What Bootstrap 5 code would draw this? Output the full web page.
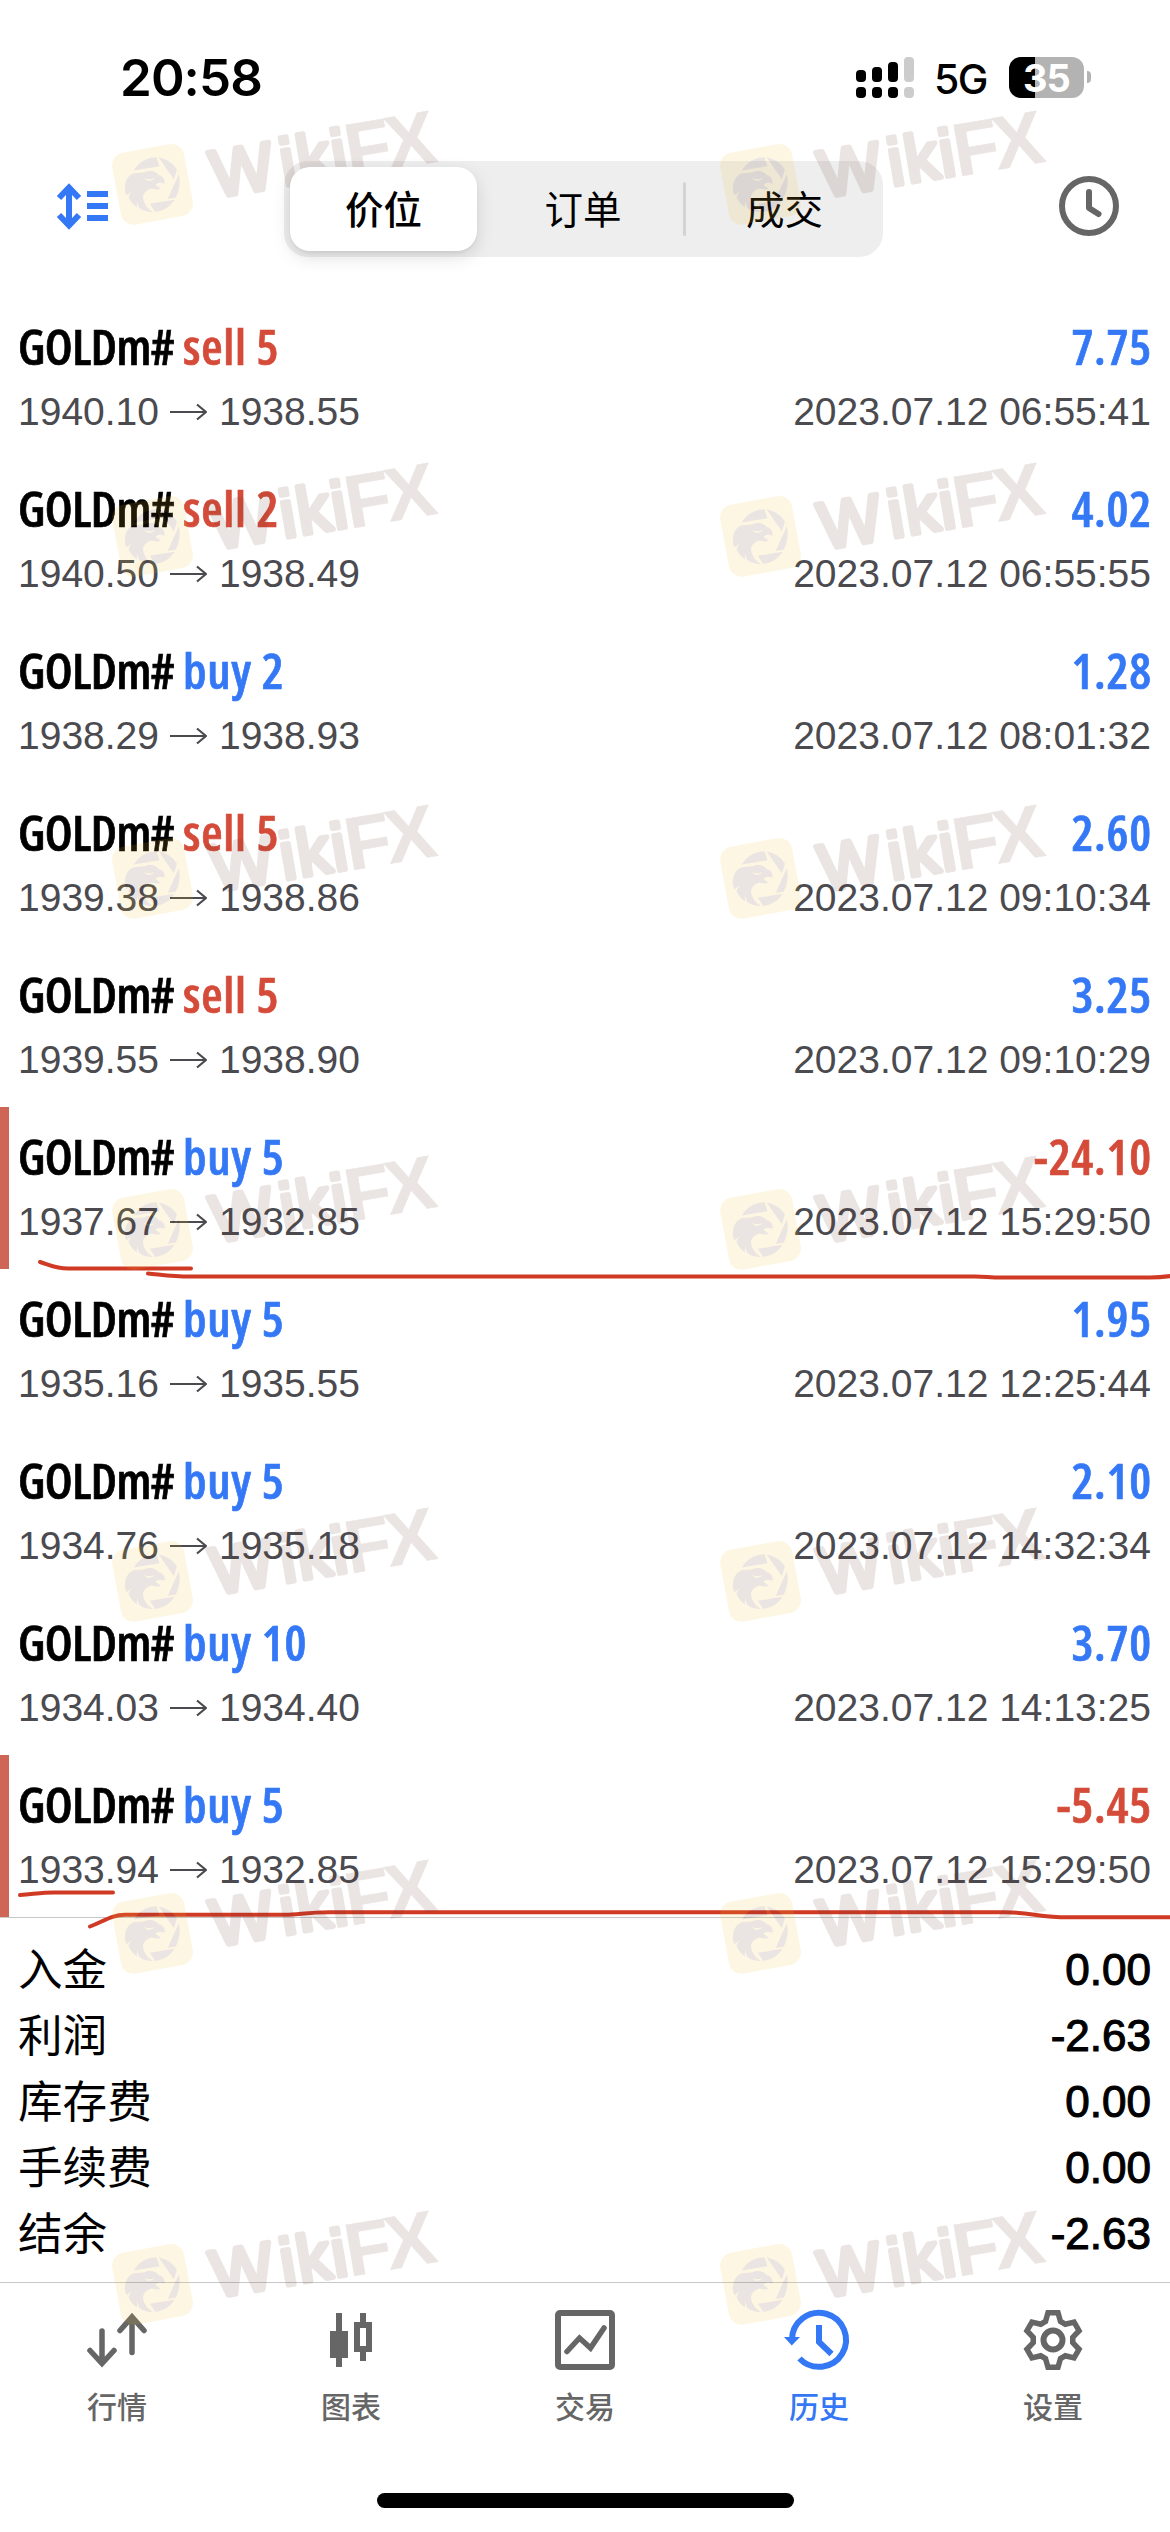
<!DOCTYPE html>
<html lang="zh-CN">
<head>
<meta charset="utf-8">
<meta name="viewport" content="width=device-width, initial-scale=1">
<title>历史</title>
<link href="https://cdn.jsdelivr.net/npm/bootstrap@5.3.0/dist/css/bootstrap.min.css" rel="stylesheet">
<style>
  :root { --ios-blue: #3478f6; --ios-red: #d54b39; --ink: #4a4a4f; --tab: #666; --hair: #c8c8ca; }
  body { background: #fff; color: #000; font-family: "Liberation Sans", "Noto Sans CJK SC", sans-serif; }
  .screen { width: 1170px; height: 2532px; }
  svg { display: block; overflow: visible; }

  .statusbar { height: 161px; padding: 52px 79px 0 120px; }
  .clock-text { font: 600 51px/51px Inter, sans-serif; letter-spacing: -.9px; }
  .net-text { font: 500 41px/50px Inter, sans-serif; letter-spacing: -1.5px; margin: 2px 0 0 20px; }
  .battery { width: 75px; height: 41px; border-radius: 12px; margin: 5px 0 0 22px;
    background: linear-gradient(to right, #000 26px, #b3b3b3 26px);
    font: 700 38px/42px Inter, sans-serif; letter-spacing: -1px; }
  .battery-tip { width: 4px; height: 12px; border-radius: 0 6px 6px 0; background: #b3b3b3; margin: 19px 0 0 3px; }
  .signal { margin-top: 5px; }

  .toolbar { height: 136px; padding: 0 51px 0 57px; }
  .tool-left { margin-top: 22px; }
  .tool-right { margin-top: 15px; }
  .segments { width: 599px; height: 96px; border-radius: 24px; background: #eee; padding: 6px; }
  .segments .nav-link { flex: none; width: 200px; height: 84px; line-height: 81px; padding: 0; text-align: center; color: #000;
    font-size: 38.5px; font-weight: 500; font-family: "Noto Sans CJK SC", sans-serif; border-radius: 20px; }
  .segments .nav-link.active { width: 187px; margin-right: 6px; background: #fff; color: #000; z-index: 3; font-weight: 500;
    box-shadow: 0 6px 18px rgba(0,0,0,.13), 0 2px 3px rgba(0,0,0,.05); }
  .segments .nav-link:not(.active) { font-weight: 400; }
  .segments .nav-link:last-child { width: 191px; padding-left: 6px; }
  .segments .split { flex: none; width: 3px; height: 54px; background: #d3d3d5; border-radius: 2px; }

  .deal { height: 162px; padding: 16px 19px 0 18px; }
  .deal.loss { box-shadow: inset 9px 0 0 #cf6557; }
  .deal-name, .deal-sum { font: 600 49px/66px "Open Sans", sans-serif; font-stretch: 75%; letter-spacing: .8px; -webkit-text-stroke: .7px currentColor; }
  .deal-sum { margin-right: -1px; }
  .deal-sym { letter-spacing: -.5px; margin-right: 9px; }
  .deal-info { font-size: 39px; line-height: 66px; color: var(--ink); }
  .deal-info svg { margin: 0 12px 1px 11px; }
  .tone-up { color: var(--ios-blue); }
  .tone-down { color: var(--ios-red); }

  .totals { height: 365px; padding: 18px 19px 0 18px; border-top: 1px solid var(--hair); }
  .totals li { height: 66px; line-height: 67px; }
  .totals .key { font: 400 44.6px/62px "Noto Sans CJK SC", sans-serif; }
  .totals .sum { font-size: 44px; -webkit-text-stroke: 1.1px #000; }

  .tabbar { height: 250px; border-top: 1px solid var(--hair); padding-top: 27px; }
  .tabbar .nav-link { padding: 0; color: var(--tab); font: 500 30px/44px "Noto Sans CJK SC", sans-serif; }
  .tabbar .nav-link.active { color: var(--ios-blue); }
  .tabbar svg { margin: 0 auto 13px; }
  .home-bar { width: 417px; height: 15px; border-radius: 8px; background: #000; bottom: 24px; left: 377px; }
  .overlay { z-index: 2; pointer-events: none; }
</style>
<script src="https://cdn.jsdelivr.net/npm/bootstrap@5.3.0/dist/js/bootstrap.bundle.min.js"></script>
</head>
<body>
<svg width="0" height="0" class="position-absolute">
  <symbol id="arrow" viewBox="0 0 37 18"><path d="M0 9H36M27 1.5L36 9L27 16.500" fill="none" stroke="#4a4a4f" stroke-width="2.2"/></symbol>
  <g id="wm">
    <g opacity=".13">
      <rect x="-36.500" y="-36.500" width="73" height="73" rx="13" transform="translate(152.500 184.300) rotate(-10.500)" fill="#f0be28"/>
      <g transform="translate(106.500 138.500) scale(.3333)" fill="#65372f">
        <path d="M82 96C97 70 124 55 150 57L159 83Z"/>
        <path d="M157 57C181 61 202 76 211 94L202 122Z"/>
        <path d="M217 107C223 132 217 160 207 178L184 181Z"/>
        <path d="M204 184C190 207 167 219 146 220L130 196Z"/>
        <path d="M57 134C62 114 74 107 82 104C96 102 108 103 114 101C132 92 152 101 157 110C170 112 176 124 174 136C162 130 152 134 147 139C152 145 158 147 162 151C150 155 142 151 134 150C118 156 108 166 110 181C114 202 128 215 140 220C122 222 106 215 98 208L92 190L91 206C78 198 70 186 66 174L76 158L60 170C54 158 54 146 57 134Z"/>
        <path d="M112 118Q124 126 144 119Q132 133 118 124Z" fill="#f0be28"/>
      </g>
    </g>
    <g opacity=".13" transform="translate(214.500 200.500) rotate(-9.600)" fill="#65372f" stroke="#65372f" font-family="Liberation Sans, sans-serif">
      <g font-size="66" stroke-width="5.200" stroke-linejoin="round"><text y="-3" x="1 71 88 123">Wiki</text></g>
      <g font-size="75" font-weight="700" stroke-width=".5"><text y="-1" x="137 178">FX</text></g>
    </g>
  </g>
</svg>

<main class="screen position-relative overflow-hidden mx-auto d-flex flex-column">
  <header>
    <div class="statusbar d-flex align-items-start">
      <div class="clock-text me-auto">20:58</div>
      <svg class="signal" width="58" height="41" viewBox="0 0 58 41">
        <rect y="13" width="10" height="12" rx="4"/><rect y="30" width="10" height="11" rx="4"/>
        <rect x="16" y="10" width="10" height="15" rx="4"/><rect x="16" y="30" width="10" height="11" rx="4"/>
        <rect x="32" y="5" width="10" height="20" rx="4"/><rect x="32" y="30" width="10" height="11" rx="4"/>
        <g fill="#ccc"><rect x="48" width="10" height="25" rx="4"/><rect x="48" y="30" width="10" height="11" rx="4"/></g>
      </svg>
      <div class="net-text">5G</div>
      <div class="battery text-white text-center">35</div>
      <div class="battery-tip"></div>
    </div>
    <div class="toolbar d-flex align-items-start justify-content-between">
      <svg class="tool-left" width="51" height="48" viewBox="0 0 51 48">
        <g fill="none" stroke="#3478f6" stroke-width="6"><path d="M12 5V42M2 15L12 4.500L22 15M2 32L12 42.500L22 32"/><path d="M30 11H51M30 23H51M30 35H51"/></g>
      </svg>
      <nav class="segments nav nav-pills flex-nowrap align-items-center">
        <a class="nav-link active position-relative">价位</a>
        <a class="nav-link">订单</a>
        <span class="split"></span>
        <a class="nav-link">成交</a>
      </nav>
      <svg class="tool-right" width="60" height="60" viewBox="0 0 60 60" fill="none" stroke="#666" stroke-width="6" stroke-linecap="round" stroke-linejoin="round"><circle cx="30" cy="30" r="27"/><path d="M30 16V32L39.500 38"/></svg>
    </div>
  </header>

  <section>
    <div class="deal">
      <div class="d-flex justify-content-between"><div class="deal-name d-flex"><span class="deal-sym">GOLDm#</span><span class="tone-down">sell 5</span></div><div class="deal-sum tone-up">7.75</div></div>
      <div class="deal-info d-flex justify-content-between"><div class="d-flex align-items-center">1940.10<svg width="37" height="18"><use href="#arrow"/></svg>1938.55</div><div>2023.07.12 06:55:41</div></div>
    </div>
    <div class="deal">
      <div class="d-flex justify-content-between"><div class="deal-name d-flex"><span class="deal-sym">GOLDm#</span><span class="tone-down">sell 2</span></div><div class="deal-sum tone-up">4.02</div></div>
      <div class="deal-info d-flex justify-content-between"><div class="d-flex align-items-center">1940.50<svg width="37" height="18"><use href="#arrow"/></svg>1938.49</div><div>2023.07.12 06:55:55</div></div>
    </div>
    <div class="deal">
      <div class="d-flex justify-content-between"><div class="deal-name d-flex"><span class="deal-sym">GOLDm#</span><span class="tone-up">buy 2</span></div><div class="deal-sum tone-up">1.28</div></div>
      <div class="deal-info d-flex justify-content-between"><div class="d-flex align-items-center">1938.29<svg width="37" height="18"><use href="#arrow"/></svg>1938.93</div><div>2023.07.12 08:01:32</div></div>
    </div>
    <div class="deal">
      <div class="d-flex justify-content-between"><div class="deal-name d-flex"><span class="deal-sym">GOLDm#</span><span class="tone-down">sell 5</span></div><div class="deal-sum tone-up">2.60</div></div>
      <div class="deal-info d-flex justify-content-between"><div class="d-flex align-items-center">1939.38<svg width="37" height="18"><use href="#arrow"/></svg>1938.86</div><div>2023.07.12 09:10:34</div></div>
    </div>
    <div class="deal">
      <div class="d-flex justify-content-between"><div class="deal-name d-flex"><span class="deal-sym">GOLDm#</span><span class="tone-down">sell 5</span></div><div class="deal-sum tone-up">3.25</div></div>
      <div class="deal-info d-flex justify-content-between"><div class="d-flex align-items-center">1939.55<svg width="37" height="18"><use href="#arrow"/></svg>1938.90</div><div>2023.07.12 09:10:29</div></div>
    </div>
    <div class="deal loss">
      <div class="d-flex justify-content-between"><div class="deal-name d-flex"><span class="deal-sym">GOLDm#</span><span class="tone-up">buy 5</span></div><div class="deal-sum tone-down">-24.10</div></div>
      <div class="deal-info d-flex justify-content-between"><div class="d-flex align-items-center">1937.67<svg width="37" height="18"><use href="#arrow"/></svg>1932.85</div><div>2023.07.12 15:29:50</div></div>
    </div>
    <div class="deal">
      <div class="d-flex justify-content-between"><div class="deal-name d-flex"><span class="deal-sym">GOLDm#</span><span class="tone-up">buy 5</span></div><div class="deal-sum tone-up">1.95</div></div>
      <div class="deal-info d-flex justify-content-between"><div class="d-flex align-items-center">1935.16<svg width="37" height="18"><use href="#arrow"/></svg>1935.55</div><div>2023.07.12 12:25:44</div></div>
    </div>
    <div class="deal">
      <div class="d-flex justify-content-between"><div class="deal-name d-flex"><span class="deal-sym">GOLDm#</span><span class="tone-up">buy 5</span></div><div class="deal-sum tone-up">2.10</div></div>
      <div class="deal-info d-flex justify-content-between"><div class="d-flex align-items-center">1934.76<svg width="37" height="18"><use href="#arrow"/></svg>1935.18</div><div>2023.07.12 14:32:34</div></div>
    </div>
    <div class="deal">
      <div class="d-flex justify-content-between"><div class="deal-name d-flex"><span class="deal-sym">GOLDm#</span><span class="tone-up">buy 10</span></div><div class="deal-sum tone-up">3.70</div></div>
      <div class="deal-info d-flex justify-content-between"><div class="d-flex align-items-center">1934.03<svg width="37" height="18"><use href="#arrow"/></svg>1934.40</div><div>2023.07.12 14:13:25</div></div>
    </div>
    <div class="deal loss">
      <div class="d-flex justify-content-between"><div class="deal-name d-flex"><span class="deal-sym">GOLDm#</span><span class="tone-up">buy 5</span></div><div class="deal-sum tone-down">-5.45</div></div>
      <div class="deal-info d-flex justify-content-between"><div class="d-flex align-items-center">1933.94<svg width="37" height="18"><use href="#arrow"/></svg>1932.85</div><div>2023.07.12 15:29:50</div></div>
    </div>
  </section>

  <ul class="totals list-unstyled mb-0">
    <li class="d-flex justify-content-between"><span class="key">入金</span><span class="sum">0.00</span></li>
    <li class="d-flex justify-content-between"><span class="key">利润</span><span class="sum">-2.63</span></li>
    <li class="d-flex justify-content-between"><span class="key">库存费</span><span class="sum">0.00</span></li>
    <li class="d-flex justify-content-between"><span class="key">手续费</span><span class="sum">0.00</span></li>
    <li class="d-flex justify-content-between"><span class="key">结余</span><span class="sum">-2.63</span></li>
  </ul>

  <footer class="tabbar">
    <nav class="nav nav-fill flex-nowrap text-center">
      <a class="nav-link w-25"><svg width="60" height="60" viewBox="0 0 60 60" fill="none" stroke="currentColor" stroke-width="5.500" stroke-linecap="round"><path d="M15 21V52M3 40.500L15 53.500L27 40.500" /><path d="M45 42.500V9M33 20.500L45 7L57 20.500"/></svg>行情</a>
      <a class="nav-link w-25"><svg width="60" height="60" viewBox="0 0 60 60" fill="currentColor"><path d="M15 3h6v18h6v27h-6v9h-6v-9H9V21h6z"/><path fill-rule="evenodd" d="M39 3h6v9h6v30h-6v9h-6v-9h-6V12h6zM39 18h6v18h-6z"/></svg>图表</a>
      <a class="nav-link w-25"><svg width="60" height="60" viewBox="0 0 60 60" fill="none" stroke="currentColor" stroke-width="6"><rect x="3" y="3" width="54" height="54" rx="2"/><path d="M12 41.500L24.500 28L35.500 38L49 18" stroke-width="5.500" stroke-linecap="round"/></svg>交易</a>
      <a class="nav-link w-25 active"><svg width="60" height="60" viewBox="0 0 60 60" fill="none" stroke="currentColor" stroke-width="6"><path d="M3 30A27 27 0 1 1 10.500 48.500M30 15V32L42.500 44"/><path d="M-5 27H11L2.800 35.500Z" fill="currentColor" stroke="none"/></svg>历史</a>
      <a class="nav-link w-25"><svg width="60" height="60" viewBox="-30 -30 60 60" fill="none" stroke="currentColor" stroke-width="5.500"><circle r="9.500" stroke-width="6"/><path d="M-7.500 -18.500L-5 -27.200H5L7.500 -18.500L12.270 -15.750L21.060 -17.930L26.060 -9.270L19.770 -2.750V2.750L26.060 9.270L21.060 17.930L12.270 15.750L7.500 18.500L5 27.200H-5L-7.500 18.500L-12.270 15.750L-21.060 17.930L-26.060 9.270L-19.770 2.750V-2.750L-26.060 -9.270L-21.060 -17.930L-12.270 -15.750Z"/></svg>设置</a>
    </nav>
    <div class="home-bar position-absolute"></div>
  </footer>

  <svg class="overlay position-absolute top-0 start-0" width="1170" height="2532" viewBox="0 0 1170 2532">
    <g fill="none" stroke="#d03a25" stroke-width="4" stroke-linecap="round">
      <path d="M40 1262C50 1265 56 1268.500 68 1268.500H191"/>
      <path d="M148 1273.500C160 1274.500 172 1276.500 190 1276.500H975C990 1276.500 985 1277.500 1005 1277.500H1150Q1160 1277.500 1171 1276"/>
      <path d="M20 1895C34 1894 42 1892.500 54 1892.500H113"/>
      <path d="M90 1926.500C104 1921 112 1914.800 125 1914.800H285C300 1914.800 305 1912.300 330 1912.300H1005C1030 1912.300 1040 1917.300 1068 1917.300H1171"/>
    </g>
    <use href="#wm"/><use href="#wm" x="608"/>
    <use href="#wm" y="352"/><use href="#wm" x="608" y="352"/>
    <use href="#wm" y="694"/><use href="#wm" x="608" y="694"/>
    <use href="#wm" y="1045"/><use href="#wm" x="608" y="1045"/>
    <use href="#wm" y="1397"/><use href="#wm" x="608" y="1397"/>
    <use href="#wm" y="1749"/><use href="#wm" x="608" y="1749"/>
    <use href="#wm" y="2100"/><use href="#wm" x="608" y="2100"/>
  </svg>
</main>
</body>
</html>
